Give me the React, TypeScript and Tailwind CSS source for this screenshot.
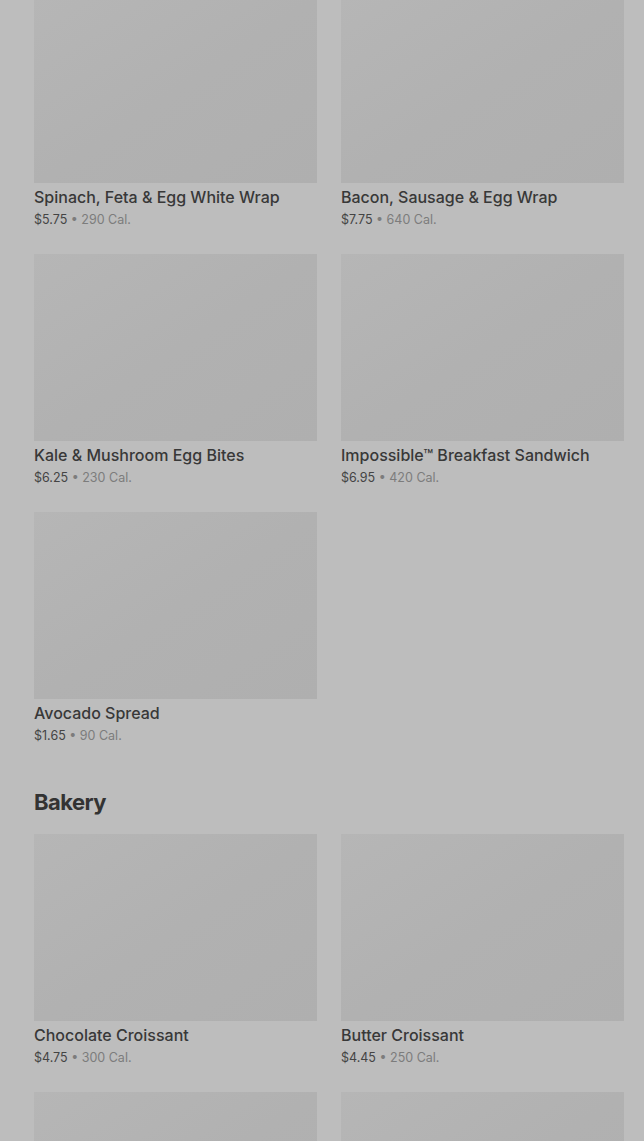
type Item = { name: string; price: string; cal: string };

const breakfast: Item[] = [
  { name: 'Spinach, Feta & Egg White Wrap', price: '$5.75', cal: '290 Cal.' },
  { name: 'Bacon, Sausage & Egg Wrap', price: '$7.75', cal: '640 Cal.' },
  { name: 'Kale & Mushroom Egg Bites', price: '$6.25', cal: '230 Cal.' },
  { name: 'Impossible™ Breakfast Sandwich', price: '$6.95', cal: '420 Cal.' },
  { name: 'Avocado Spread', price: '$1.65', cal: '90 Cal.' },
];

const bakery: Item[] = [
  { name: 'Chocolate Croissant', price: '$4.75', cal: '300 Cal.' },
  { name: 'Butter Croissant', price: '$4.45', cal: '250 Cal.' },
];

function Photo() {
  return <div className="h-[187px] w-full bg-gradient-to-br from-[#b6b6b6] via-[#b1b1b1] to-[#afafaf]" />;
}

function MenuCard({ item }: { item: Item }) {
  return (
    <div className="flex flex-col">
      <Photo />
      <p className="mt-1 text-[16px] leading-5 font-medium text-[#383838]">{item.name}</p>
      <p className="mt-1 text-[12.5px] leading-[18px]">
        <span className="text-[#444]">{item.price}</span>
        <span className="text-[#7c7c7c]"> • {item.cal}</span>
      </p>
    </div>
  );
}

export default function App() {
  return (
    <div
      className="h-[1141px] overflow-hidden bg-[#bdbdbd]"
      style={{ fontFamily: 'Inter, "Noto Sans", sans-serif' }}
    >
      <div className="-mt-[4px] pl-[34px] pr-[20px]">
        <div className="grid grid-cols-2 gap-x-6 gap-y-[25px]">
          {breakfast.map((item) => (
            <MenuCard key={item.name} item={item} />
          ))}
        </div>

        <h2 className="mt-[43px] mb-[18px] text-[22px] leading-7 font-bold tracking-tight text-[#333]">
          Bakery
        </h2>

        <div className="grid grid-cols-2 gap-x-6 gap-y-[25px]">
          {bakery.map((item) => (
            <MenuCard key={item.name} item={item} />
          ))}
          {/* next row, cut off by the viewport */}
          <Photo />
          <Photo />
        </div>
      </div>
    </div>
  );
}
